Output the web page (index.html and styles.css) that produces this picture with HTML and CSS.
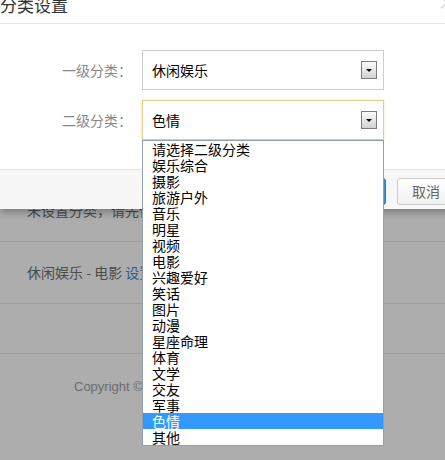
FILE: index.html
```html
<!DOCTYPE html>
<html>
<head>
<meta charset="utf-8">
<link rel="stylesheet" href="styles.css">
</head>
<body>
<div class="page">
  <div class="row">未设置分类，请先设置分类</div>
  <div class="row">休闲娱乐 - 电影 <span class="link">设置</span></div>
  <div class="spacer"></div>
  <div class="foot">Copyright © 2014 All Rights Reserved</div>
</div>
<div class="modal">
  <div class="modal-head"><span class="title">分类设置</span><span class="close">×</span></div>
  <div class="modal-body">
    <label class="label">一级分类：</label>
    <div class="select"><span class="value">休闲娱乐</span><i class="arrow"></i></div>
    <label class="label">二级分类：</label>
    <div class="select focus"><span class="value">色情</span><i class="arrow"></i>
      <ul class="options">
        <li>请选择二级分类</li>
        <li>娱乐综合</li>
        <li>摄影</li>
        <li>旅游户外</li>
        <li>音乐</li>
        <li>明星</li>
        <li>视频</li>
        <li>电影</li>
        <li>兴趣爱好</li>
        <li>笑话</li>
        <li>图片</li>
        <li>动漫</li>
        <li>星座命理</li>
        <li>体育</li>
        <li>文学</li>
        <li>交友</li>
        <li>军事</li>
        <li class="active">色情</li>
        <li>其他</li>
      </ul>
    </div>
  </div>
  <div class="modal-foot"><button class="btn primary">确定</button><button class="btn">取消</button></div>
</div>
</body>
</html>
```
FILE: styles.css
```css
html, body {
  margin: 0;
  padding: 0;
  height: 460px;
  overflow: hidden;
}
body {
  background: #adadad;
  font-family: "Noto Sans CJK SC", sans-serif;
  font-size: 14px;
  position: relative;
}
.page {
  padding-top: 180px;
}
.row {
  height: 61px;
  line-height: 61px;
  padding-left: 27px;
  border-bottom: 1px solid #a0a0a0;
  color: #4a4a4a;
  white-space: nowrap;
}
.link {
  color: #2d5a8c;
}
.spacer {
  height: 49px;
}
.foot {
  border-top: 1px solid #a0a0a0;
  padding-top: 23px;
  padding-left: 74px;
  line-height: 20px;
  font-family: "Liberation Sans", "Noto Sans CJK SC", sans-serif;
  font-size: 13px;
  color: #6b6b6b;
  white-space: nowrap;
}
.modal {
  position: absolute;
  top: -24px;
  left: 0;
  width: 460px;
  background: #fff;
  box-shadow: 0 3px 8px rgba(0, 0, 0, 0.3);
  z-index: 5;
}
.modal-head {
  position: relative;
  padding: 17px 0 6px 0;
  border-bottom: 1px solid #e5e5e5;
}
.title {
  display: block;
  font-size: 17px;
  line-height: 24px;
  color: #333;
}
.close {
  position: absolute;
  left: 437px;
  top: 14px;
  font-size: 20px;
  line-height: 24px;
  color: #d8d8d8;
}
.modal-body {
  display: grid;
  grid-template-columns: 132px 242px;
  column-gap: 10px;
  row-gap: 10px;
  padding: 26px 0 29px 0;
}
.label {
  text-align: right;
  line-height: 40px;
  color: #888;
  font-size: 14px;
}
.select {
  position: relative;
  box-sizing: border-box;
  height: 40px;
  border: 1px solid #cdcdcd;
  display: flex;
  align-items: center;
  padding-left: 9px;
  color: #000;
  font-size: 14px;
}
.select.focus {
  border-color: #e3cd8c;
  box-shadow: 0 0 3px rgba(230, 205, 130, 0.45);
}
.value {
  flex: 1;
}
.arrow {
  box-sizing: border-box;
  width: 16px;
  height: 18px;
  margin-right: 6px;
  border: 1px solid #7c7c7c;
  background: linear-gradient(#fbfbfb, #d2d2d2);
  display: flex;
  align-items: center;
  justify-content: center;
}
.arrow::after {
  content: "";
  width: 0;
  height: 0;
  border-left: 3px solid transparent;
  border-right: 3px solid transparent;
  border-top: 3px solid #000;
}
.options {
  position: absolute;
  left: -1px;
  top: calc(100% + 1px);
  width: 242px;
  box-sizing: border-box;
  margin: 0;
  padding: 0;
  list-style: none;
  background: #fff;
  border: 1px solid #8f9fb0;
  z-index: 10;
}
.options li {
  line-height: 16px;
  height: 16px;
  padding-left: 9px;
  color: #000;
  font-size: 14px;
  white-space: nowrap;
}
.options li.active {
  background: #3399ff;
  color: #fff;
}
.modal-foot {
  border-top: 1px solid #e5e5e5;
  background: #f7f7f7;
  padding: 8px 5px 4px 0;
  display: flex;
  justify-content: flex-end;
  gap: 11px;
}
.btn {
  box-sizing: border-box;
  height: 27px;
  width: 58px;
  padding: 0;
  border: 1px solid #ccc;
  border-radius: 3px;
  background: linear-gradient(#ffffff, #f0f0f0);
  color: #666;
  font-family: "Noto Sans CJK SC", sans-serif;
  font-size: 14px;
  line-height: 25px;
}
.btn.primary {
  background: #3b8dd1;
  border-color: #2e7bbd;
  color: #fff;
}
```
